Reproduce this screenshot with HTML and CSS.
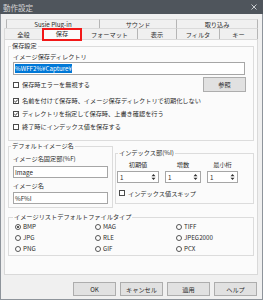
FILE: index.html
```html
<!DOCTYPE html>
<html lang="ja">
<head>
  <meta charset="UTF-8">
  <meta name="viewport" content="width=device-width, initial-scale=1.0">
  <title>動作設定</title>
  <link rel="stylesheet" href="styles.css">
</head>
<body>
  <div class="window">
    <div class="titlebar">
      <span class="title">動作設定</span>
      <svg class="close" width="6" height="6" viewBox="0 0 6 6"><path d="M0.5 0.5L5.5 5.5M5.5 0.5L0.5 5.5" stroke="#c9ccd0" stroke-width="1"/></svg>
    </div>

    <div class="tabs">
      <div class="tab-row back">
        <div class="tab w-susie">Susie Plug-in</div>
        <div class="tab w-sound">サウンド</div>
        <div class="tab w-import">取り込み</div>
      </div>
      <div class="tab-row front">
        <div class="tab w-general">全般</div>
        <div class="tab active w-save">保存</div>
        <div class="tab w-format">フォーマット</div>
        <div class="tab w-view">表示</div>
        <div class="tab w-filter">フィルタ</div>
        <div class="tab w-key">キー</div>
      </div>
    </div>

    <div class="panel">
      <fieldset class="group save">
        <legend>保存設定</legend>
        <div class="lbl">イメージ保存ディレクトリ</div>
        <div class="input dir"><span class="sel">%WFF2%¥Capture¥</span></div>
        <div class="row-between">
          <div class="check"><span class="cb"></span>保存時エラーを無視する</div>
          <button class="btn browse" type="button">参照</button>
        </div>
        <div class="check"><span class="cb"><svg width="4" height="4" viewBox="0 0 4 4"><path d="M0.3 2L1.5 3.2L3.7 0.6" fill="none" stroke="#222" stroke-width="0.9"/></svg></span>名前を付けて保存時、イメージ保存ディレクトリで初期化しない</div>
        <div class="check"><span class="cb"><svg width="4" height="4" viewBox="0 0 4 4"><path d="M0.3 2L1.5 3.2L3.7 0.6" fill="none" stroke="#222" stroke-width="0.9"/></svg></span>ディレクトリを指定して保存時、上書き確認を行う</div>
        <div class="check"><span class="cb"></span>終了時にインデックス値を保存する</div>
      </fieldset>

      <div class="group-row">
        <fieldset class="group name">
          <legend>デフォルトイメージ名</legend>
          <div class="lbl">イメージ名固定部(%F)</div>
          <div class="input small">Image</div>
          <div class="lbl second">イメージ名</div>
          <div class="input small tight">%F%I</div>
        </fieldset>

        <fieldset class="group index">
          <legend>インデックス部(%I)</legend>
          <div class="spin-cols">
            <div class="spin-col c1">
              <div class="lbl center">初期値</div>
              <div class="spin"><span>1</span><svg width="5" height="8" viewBox="0 0 5 8"><path d="M0.5 3.3L2.5 1L4.5 3.3Z M0.5 4.7L2.5 7L4.5 4.7Z" fill="#333"/></svg></div>
            </div>
            <div class="spin-col c2">
              <div class="lbl center">増数</div>
              <div class="spin"><span>1</span><svg width="5" height="8" viewBox="0 0 5 8"><path d="M0.5 3.3L2.5 1L4.5 3.3Z M0.5 4.7L2.5 7L4.5 4.7Z" fill="#333"/></svg></div>
            </div>
            <div class="spin-col c3">
              <div class="lbl center">最小桁</div>
              <div class="spin"><span>1</span><svg width="5" height="8" viewBox="0 0 5 8"><path d="M0.5 3.3L2.5 1L4.5 3.3Z M0.5 4.7L2.5 7L4.5 4.7Z" fill="#333"/></svg></div>
            </div>
          </div>
          <div class="check skip"><span class="cb"></span>インデックス値スキップ</div>
        </fieldset>
      </div>

      <fieldset class="group types">
        <legend>イメージリストデフォルトファイルタイプ</legend>
        <div class="radios">
          <div class="radio"><span class="rb on"></span>BMP</div>
          <div class="radio"><span class="rb"></span>MAG</div>
          <div class="radio"><span class="rb"></span>TIFF</div>
          <div class="radio"><span class="rb"></span>JPG</div>
          <div class="radio"><span class="rb"></span>RLE</div>
          <div class="radio"><span class="rb"></span>JPEG2000</div>
          <div class="radio"><span class="rb"></span>PNG</div>
          <div class="radio"><span class="rb"></span>GIF</div>
          <div class="radio"><span class="rb"></span>PCX</div>
        </div>
      </fieldset>
    </div>

    <div class="buttons">
      <button class="btn" type="button">OK</button>
      <button class="btn" type="button">キャンセル</button>
      <button class="btn" type="button">適用</button>
      <button class="btn" type="button">ヘルプ</button>
    </div>
  </div>
</body>
</html>
```

FILE: styles.css
```css
* {
  box-sizing: border-box;
}
body {
  margin: 0;
  font-family: "Noto Sans CJK JP", sans-serif;
  font-size: 6.2px;
  line-height: 9px;
  color: #2b2b2b;
  background: #f0f0f0;
}
.window {
  width: 263px;
  height: 300px;
  border: 1px solid #8e949b;
  border-top: none;
  background: #f0f0f0;
}
.titlebar {
  height: 14px;
  margin: 0 -1px;
  padding: 0 6px 0 3px;
  display: flex;
  align-items: center;
  justify-content: space-between;
  background: #4f555c;
}
.title {
  font-size: 7.5px;
  color: #d6d6d6;
}

/* tabs */
.tabs {
  margin: 5px 0 0 3px;
  width: 254px;
}
.tab-row {
  display: flex;
  align-items: flex-start;
}
.tab-row.back {
  height: 9px;
  padding-left: 2px;
}
.tab-row.front {
  height: 11px;
  position: relative;
  z-index: 1;
}
.tab {
  height: 100%;
  display: flex;
  align-items: center;
  justify-content: center;
  border-left: 1px solid #b5b5b5;
  border-top: 1px solid #dadada;
  white-space: nowrap;
  background: #f0f0f0;
}
.tab:last-child {
  border-right: 1px solid #b5b5b5;
}
.tab.active {
  height: 13px;
  padding-bottom: 2px;
  border: 2px solid #f21818;
  background: #fbfbfb;
}
.w-susie { width: 93px; }
.w-sound { width: 77px; }
.w-import { width: 82px; }
.w-general { width: 38px; border-left-color: #dadada; }
.w-save { width: 40px; }
.w-format { width: 55px; border-left: none; }
.w-view { width: 39px; }
.w-filter { width: 43px; }
.w-key { width: 39px; }

/* panel */
.panel {
  width: 254px;
  height: 236px;
  margin-left: 3px;
  padding: 2px 3px;
  border: 1px solid #d9d9d9;
  background: #fbfbfb;
}
.group {
  margin: 0;
  min-width: 0;
  padding: 2px 4px 7px;
  border: 1px solid #dcdcdc;
}
.group legend {
  padding: 0 1px;
  margin-left: -2px;
  line-height: 8px;
}
.lbl {
  white-space: nowrap;
}
.lbl.center {
  text-align: center;
}
.input {
  height: 13px;
  margin-top: 1px;
  padding-left: 1px;
  display: flex;
  align-items: center;
  border: 1px solid #a6a6a6;
  background: #fff;
  white-space: nowrap;
}
.input.dir {
  width: 232px;
}
.sel {
  background: #0078d7;
  color: #fff;
  line-height: 9px;
}
.row-between {
  margin-top: 2px;
  height: 15px;
  display: flex;
  align-items: center;
  justify-content: space-between;
}
.check {
  height: 13px;
  display: flex;
  align-items: center;
  white-space: nowrap;
}
.row-between + .check {
  margin-top: 2px;
}
.cb {
  width: 6px;
  height: 6px;
  margin-right: 3px;
  display: flex;
  align-items: center;
  justify-content: center;
  border: 1px solid #4a4a4a;
  background: #fff;
}
.btn {
  width: 43px;
  height: 14px;
  padding: 0;
  border: 1px solid #adadad;
  background: #e1e1e1;
  font-family: inherit;
  font-size: 6.2px;
  color: #2b2b2b;
}
.browse {
  height: 15px;
  margin-right: 3px;
}

/* middle groups */
.group-row {
  display: flex;
  gap: 2px;
  margin-top: 1px;
}
.group.name {
  width: 105px;
  padding: 4px 4px 3px;
}
.input.small {
  height: 12px;
  margin-top: 3px;
}
.lbl.second {
  margin-top: 3px;
}
.input.small.tight {
  margin-top: 2px;
}
.group.index {
  flex: 1;
  margin-top: 7px;
  align-self: flex-start;
  padding: 3px 1px 4px;
}
.group.index legend {
  margin-left: 1px;
}
.spin-cols {
  display: flex;
  gap: 6px;
}
.c1 { width: 42px; }
.c2 { width: 36px; }
.c3 { width: 31px; }
.spin {
  height: 12px;
  margin-top: 2px;
  padding: 0 2px 0 2px;
  display: flex;
  align-items: center;
  justify-content: space-between;
  border: 1px solid #a6a6a6;
  background: #fff;
}
.check.skip {
  margin-top: 4px;
  margin-left: 2px;
  height: 12px;
}

/* radio group */
.group.types {
  margin-top: 5px;
  padding: 0 4px 1px 6px;
}
.radios {
  display: grid;
  grid-template-columns: 80px 81px 1fr;
}
.radio {
  height: 11px;
  display: flex;
  align-items: center;
}
.rb {
  width: 6px;
  height: 6px;
  margin-right: 2px;
  display: flex;
  align-items: center;
  justify-content: center;
  border: 1px solid #555;
  border-radius: 50%;
  background: #fff;
}
.rb.on::after {
  content: "";
  width: 2px;
  height: 2px;
  border-radius: 50%;
  background: #222;
}

/* bottom buttons */
.buttons {
  margin-top: 7px;
  padding-right: 5px;
  display: flex;
  justify-content: flex-end;
  gap: 4px;
}
```
